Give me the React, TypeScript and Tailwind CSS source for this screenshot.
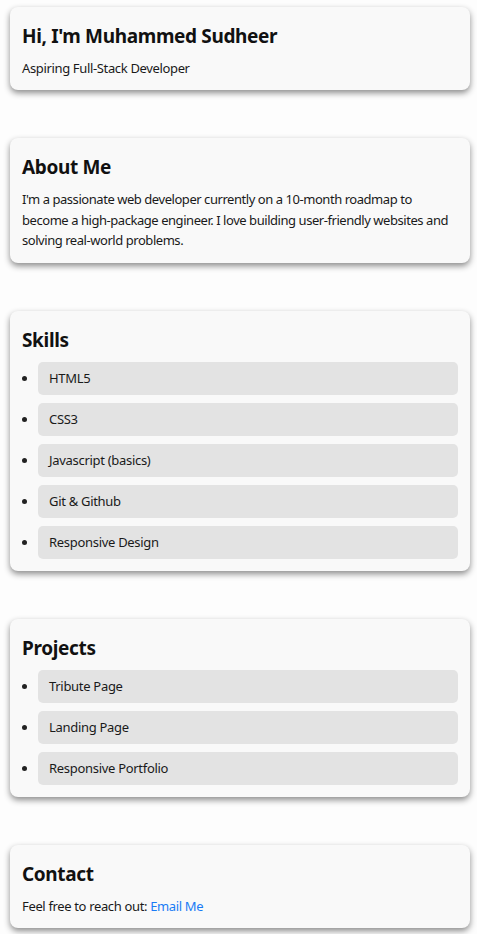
import React from "react";

const skills = ["HTML5", "CSS3", "Javascript (basics)", "Git & Github", "Responsive Design"];
const projects = ["Tribute Page", "Landing Page", "Responsive Portfolio"];

const Card: React.FunctionComponent<{ children: React.ReactNode }> = ({ children }) => (
  <section className="ml-[10px] mr-[7px] mb-[48px] rounded-[8px] bg-[#f9f9f9] px-[12px] pt-[16px] pb-[12px] shadow-[0_3px_6px_rgba(0,0,0,0.45)]">
    {children}
  </section>
);

const Title: React.FunctionComponent<{ children: React.ReactNode }> = ({ children }) => (
  <h2 className="text-[19px] leading-[26px] font-bold tracking-[-0.35px] text-[#111]">{children}</h2>
);

const List: React.FunctionComponent<{ items: string[] }> = ({ items }) => (
  <ul className="mt-[9px] flex list-disc flex-col gap-[8px] pl-[16px]">
    {items.map((item) => (
      <li
        key={item}
        className="h-[33px] rounded-[5px] bg-[#e3e3e3] pl-[11px] text-[13px] tracking-[-0.3px] text-[#1a1a1a] marker:text-[#222]"
        style={{ lineHeight: "33px" }}
      >
        {item}
      </li>
    ))}
  </ul>
);

export default function App() {
  return (
    <div
      className="bg-[#fdfdfd] pt-[7px] pb-[4px] text-[#1a1a1a]"
      style={{ fontFamily: "'Noto Sans', 'Open Sans', sans-serif" }}
    >
      <Card>
        <h1 className="text-[19px] leading-[26px] font-bold tracking-[-0.35px] text-[#111]">
          Hi, I'm Muhammed Sudheer
        </h1>
        <p className="mt-[9px] text-[13px] leading-[20px] tracking-[-0.35px]">Aspiring Full-Stack Developer</p>
      </Card>

      <Card>
        <Title>About Me</Title>
        <p className="mt-[9px] text-[13px] leading-[20.5px] tracking-[-0.45px]">
          I'm a passionate web developer currently on a 10-month roadmap to become a high-package engineer. I love
          building user-friendly websites and solving real-world problems.
        </p>
      </Card>

      <Card>
        <Title>Skills</Title>
        <List items={skills} />
      </Card>

      <Card>
        <Title>Projects</Title>
        <List items={projects} />
      </Card>

      <Card>
        <Title>Contact</Title>
        <p className="mt-[9px] text-[13px] leading-[20px] tracking-[-0.35px]">
          Feel free to reach out:{" "}
          <a href="#" className="text-[#1a7cf5]">
            Email Me
          </a>
        </p>
      </Card>
    </div>
  );
}
